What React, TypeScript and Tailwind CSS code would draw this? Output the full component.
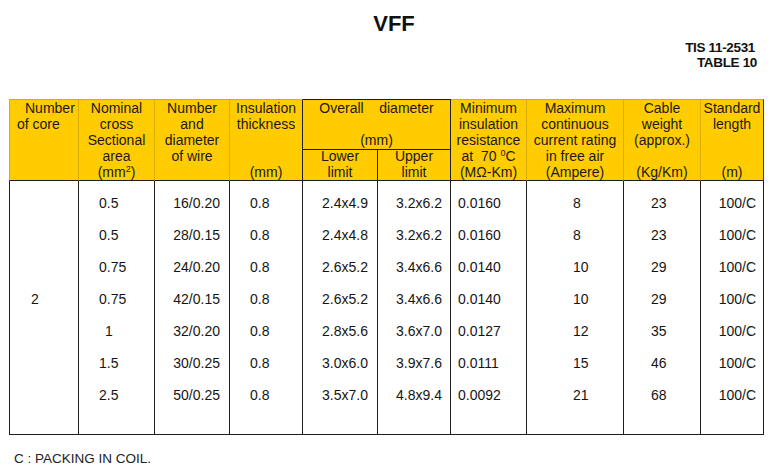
import React from 'react';

const faint = 'border-[#dcae00]';
const dark = 'border-[#1e1e1e]';

type Row = [string, string, string, string, string, string, string, string, string, string];

const rows: Row[] = [
  ['', '0.5', '16/0.20', '0.8', '2.4x4.9', '3.2x6.2', '0.0160', '8', '23', '100/C'],
  ['', '0.5', '28/0.15', '0.8', '2.4x4.8', '3.2x6.2', '0.0160', '8', '23', '100/C'],
  ['', '0.75', '24/0.20', '0.8', '2.6x5.2', '3.4x6.6', '0.0140', '10', '29', '100/C'],
  ['2', '0.75', '42/0.15', '0.8', '2.6x5.2', '3.4x6.6', '0.0140', '10', '29', '100/C'],
  ['', '1', '32/0.20', '0.8', '2.8x5.6', '3.6x7.0', '0.0127', '12', '35', '100/C'],
  ['', '1.5', '30/0.25', '0.8', '3.0x6.0', '3.9x7.6', '0.0111', '15', '46', '100/C'],
  ['', '2.5', '50/0.25', '0.8', '3.5x7.0', '4.8x9.4', '0.0092', '21', '68', '100/C'],
];

// padding / alignment per body column, read off the picture
const cellCls = [
  'text-left pl-[21px]',
  'text-left pl-[20px]',
  'text-right pr-[9px]',
  'text-left pl-[20px]',
  'text-right pr-[9px]',
  'text-right pr-[8px]',
  'text-left pl-[7px]',
  'text-left pl-[46px]',
  'text-left pl-[27px]',
  'text-right pr-[7px]',
];

const colWidths = [70, 76, 75, 73, 75, 73, 76, 97, 77, 63];

const Lines: React.FC<{ lines: React.ReactNode[] }> = ({ lines }) => (
  <div className="flex flex-col">
    {lines.map((l, i) => (
      <div key={i} className="h-[16px] leading-[16px] whitespace-pre">
        {l === '' ? '\u00a0' : l}
      </div>
    ))}
  </div>
);

const Sup: React.FC<{ children: React.ReactNode }> = ({ children }) => (
  <span className="relative -top-[5px] text-[9px] leading-none">{children}</span>
);

const App: React.FC = () => {
  const headCell = `align-top p-0 border-t border-b border-r ${faint} border-b-[#1e1e1e] text-center`;

  return (
    <div className="w-[776px] h-[476px] bg-white text-[#111] font-['Liberation_Sans',Arial,sans-serif] overflow-hidden">
      <div className="pt-[11px] text-center text-[22px] font-bold leading-[26px] pl-[12px]">VFF</div>

      <div className="mt-[3px] text-right text-[13.5px] font-bold leading-[15px] tracking-tight">
        <div className="pr-[21px]">TIS 11-2531</div>
        <div className="pr-[19px]">TABLE 10</div>
      </div>

      <table className="mt-[29px] ml-[9px] w-[755px] table-fixed border-separate border-spacing-0 text-[14px]">
        <colgroup>
          {colWidths.map((w, i) => (
            <col key={i} style={{ width: w }} />
          ))}
        </colgroup>
        <thead className="bg-[#ffcc00] text-[#1a1a1a]">
          <tr>
            <th rowSpan={2} className={`${headCell} border-l text-left font-normal`}>
              <Lines lines={[<span className="pl-[15px]">Number</span>, <span className="pl-[7px]">of core</span>, '', '', '']} />
            </th>
            <th rowSpan={2} className={`${headCell} font-normal`}>
              <Lines lines={['Nominal', 'cross', 'Sectional', 'area', <>(mm<Sup>2</Sup>)</>]} />
            </th>
            <th rowSpan={2} className={`${headCell} font-normal`}>
              <Lines lines={['Number', 'and', 'diameter', 'of wire', '']} />
            </th>
            <th rowSpan={2} className={`${headCell} border-r-[#1e1e1e] font-normal`}>
              <Lines lines={['Insulation', 'thickness', '', '', '(mm)']} />
            </th>
            <th colSpan={2} className={`align-top p-0 border-t border-r ${dark} text-center font-normal`}>
              <div className="h-[48px]">
                <Lines lines={['Overall    diameter', '', '(mm)']} />
              </div>
            </th>
            <th rowSpan={2} className={`${headCell} font-normal`}>
              <Lines lines={['Minimum', 'insulation', 'resistance', <>at  70 <Sup>0</Sup>C</>, '(M\u03a9-Km)']} />
            </th>
            <th rowSpan={2} className={`${headCell} font-normal`}>
              <Lines lines={['Maximum', 'continuous', 'current rating', 'in free air', '(Ampere)']} />
            </th>
            <th rowSpan={2} className={`${headCell} font-normal`}>
              <Lines lines={['Cable', 'weight', '(approx.)', '', '(Kg/Km)']} />
            </th>
            <th rowSpan={2} className={`${headCell} border-r-[#3a3a1a] font-normal`}>
              <Lines lines={['Standard', 'length', '', '', '(m)']} />
            </th>
          </tr>
          <tr>
            <th className={`align-top p-0 border-t border-b border-r ${dark} text-center font-normal`}>
              <div className="h-[32px] -mt-[2px]">
                <Lines lines={['Lower', 'limit']} />
              </div>
            </th>
            <th className={`align-top p-0 border-t border-b border-r ${dark} text-center font-normal`}>
              <div className="h-[32px] -mt-[2px]">
                <Lines lines={['Upper', 'limit']} />
              </div>
            </th>
          </tr>
        </thead>
        <tbody className="text-[#151515]">
          <tr>
            {colWidths.map((_, i) => (
              <td key={i} className={`h-[6px] p-0 border-r ${dark} ${i === 0 ? 'border-l' : ''}`} />
            ))}
          </tr>
          {rows.map((r, ri) => (
            <tr key={ri}>
              {r.map((v, ci) => (
                <td
                  key={ci}
                  className={`h-[32px] p-0 leading-[32px] whitespace-nowrap border-r ${dark} ${ci === 0 ? 'border-l' : ''} ${cellCls[ci]}`}
                >
                  {ci === 1 && v === '1' ? <span className="pl-[6px]">{v}</span> : v}
                </td>
              ))}
            </tr>
          ))}
          <tr>
            {colWidths.map((_, i) => (
              <td key={i} className={`h-[24px] p-0 border-r border-b ${dark} ${i === 0 ? 'border-l' : ''}`} />
            ))}
          </tr>
        </tbody>
      </table>

      <div className="mt-[16px] pl-[14px] text-[13.5px] leading-[16px] text-[#222]">C : PACKING IN COIL.</div>
    </div>
  );
};

export default App;
